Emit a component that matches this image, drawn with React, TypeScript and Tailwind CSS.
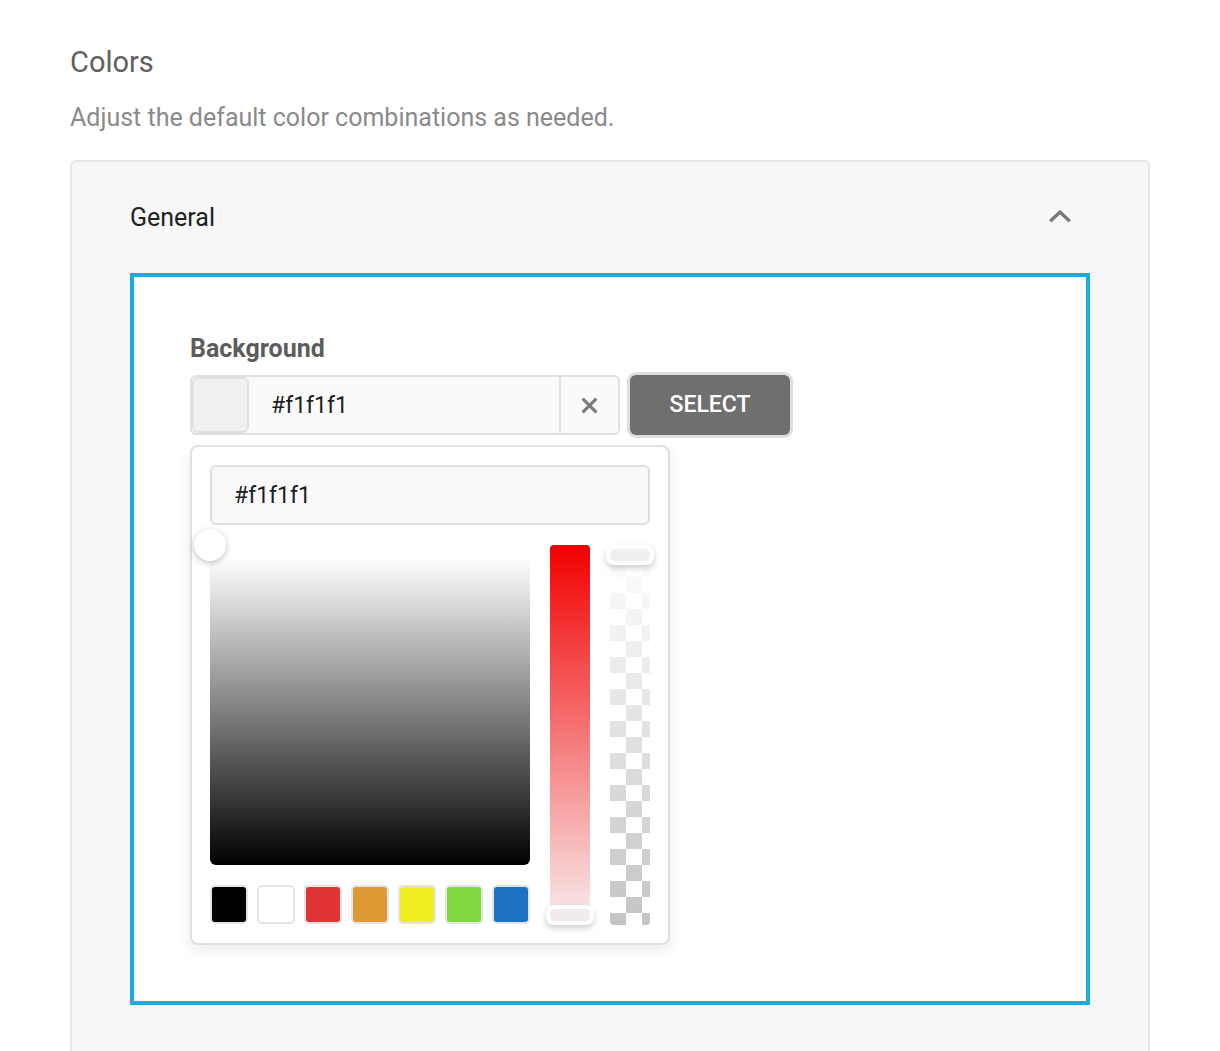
import { useState } from "react";

const swatches = ["#000000", "#ffffff", "#e03434", "#de9a35", "#f0ef22", "#80d843", "#1c73c0"];

function ChevronUp() {
  return (
    <svg width="24" height="14" viewBox="0 0 24 14" fill="none">
      <path d="M3.5 11L12 3l8.5 8" stroke="#7a7a7a" strokeWidth="3.4" strokeLinecap="square" />
    </svg>
  );
}

function CloseIcon() {
  return (
    <svg width="19" height="19" viewBox="0 0 18 18" fill="none">
      <path d="M2.5 2.5l13 13M15.5 2.5l-13 13" stroke="#7b7b7b" strokeWidth="3" />
    </svg>
  );
}

function ColorPicker({ value }: { value: string }) {
  return (
    <div className="mt-[10px] w-[480px] h-[500px] rounded-lg border-2 border-[#e0e0e0] bg-white p-[18px] shadow-[0_6px_14px_rgba(0,0,0,0.08)]">
      <div className="h-[60px] rounded-md border-2 border-[#dedede] bg-[#f9f9f9] flex items-center px-[22px] pt-[3px] text-[23px] text-[#1f1f1f]">
        {value}
      </div>
      <div className="mt-[20px] flex gap-[20px]">
        <div className="w-[320px]">
          <div className="relative h-[320px] rounded-b-md bg-[linear-gradient(to_bottom,#ffffff_4%,#000000)]">
            <div className="absolute -left-4 -top-4 w-8 h-8 rounded-full bg-white shadow-[0_2px_6px_rgba(0,0,0,0.25)]"></div>
          </div>
          <div className="mt-[20px] flex justify-between">
            {swatches.map((c) => (
              <div key={c} className="w-[38px] h-[39px] rounded-[5px] border-2 border-[#e4e4e4]" style={{ backgroundColor: c }}></div>
            ))}
          </div>
        </div>
        <div className="relative w-[40px] h-[380px]">
          <div className="h-[370px] rounded-t-[4px] bg-[linear-gradient(to_bottom,#f20000,rgba(200,60,60,0.12))]"></div>
          <div className="absolute -left-1 bottom-0 w-[48px] h-[20px] rounded-lg bg-white p-[4px] shadow-[0_3px_6px_rgba(0,0,0,0.2)]">
            <div className="w-full h-full rounded-[5px] bg-[#f1ebeb]"></div>
          </div>
        </div>
        <div className="relative w-[40px] h-[380px]">
          <div className="h-full rounded-b-[4px] overflow-hidden bg-[conic-gradient(#c4c4c4_25%,#ffffff_0_50%,#c4c4c4_0_75%,#ffffff_0)] bg-[length:32px_32px]">
            <div className="h-full bg-[linear-gradient(to_bottom,#ffffff,rgba(255,255,255,0))]"></div>
          </div>
          <div className="absolute -left-1 top-0 w-[48px] h-[20px] rounded-lg bg-white p-[4px] shadow-[0_3px_6px_rgba(0,0,0,0.2)]">
            <div className="w-full h-full rounded-[5px] bg-[#efefef]"></div>
          </div>
        </div>
      </div>
    </div>
  );
}

export default function App() {
  const [color] = useState("#f1f1f1");

  return (
    <div className="min-h-screen bg-white px-[70px] pt-[44px] font-['Roboto',sans-serif]">
      <h2 className="text-[29px] leading-[36px] text-[#606060]">Colors</h2>
      <p className="mt-[24px] text-[25px] leading-[28px] text-[#8a8a8a]">
        Adjust the default color combinations as needed.
      </p>

      <div className="mt-[28px] rounded-md border-2 border-[#e6e6e6] bg-[#f7f7f7] px-[58px] pb-[60px]">
        <div className="h-[111px] flex items-center justify-between">
          <span className="text-[25px] text-[#222]">General</span>
          <span className="mr-[18px] -mt-[3px]">
            <ChevronUp />
          </span>
        </div>

        <div className="border-4 border-[#1aabe3] bg-white pl-[56px] pt-[58px] pb-[56px]">
          <label className="block text-[25px] leading-[28px] font-bold text-[#5c5c5c]">Background</label>
          <div className="mt-[12px] flex items-center">
            <div className="flex h-[60px] w-[430px] rounded-md border-2 border-[#e0e0e0] bg-[#fafafa]">
              <div className="w-[57px] h-full rounded-md border-2 border-[#e2e2e2] bg-[#f1f1f1]"></div>
              <div className="flex-1 flex items-center pl-[22px] pt-[3px] text-[23px] text-[#1f1f1f]">{color}</div>
              <div className="w-[59px] flex items-center justify-center border-l-2 border-[#e0e0e0]">
                <CloseIcon />
              </div>
            </div>
            <button className="ml-[10px] h-[60px] w-[160px] rounded-md bg-[#6f6f6f] text-white text-[23px] font-medium ring-[3px] ring-[#dedede]">
              SELECT
            </button>
          </div>
          <ColorPicker value={color} />
        </div>
      </div>
    </div>
  );
}
